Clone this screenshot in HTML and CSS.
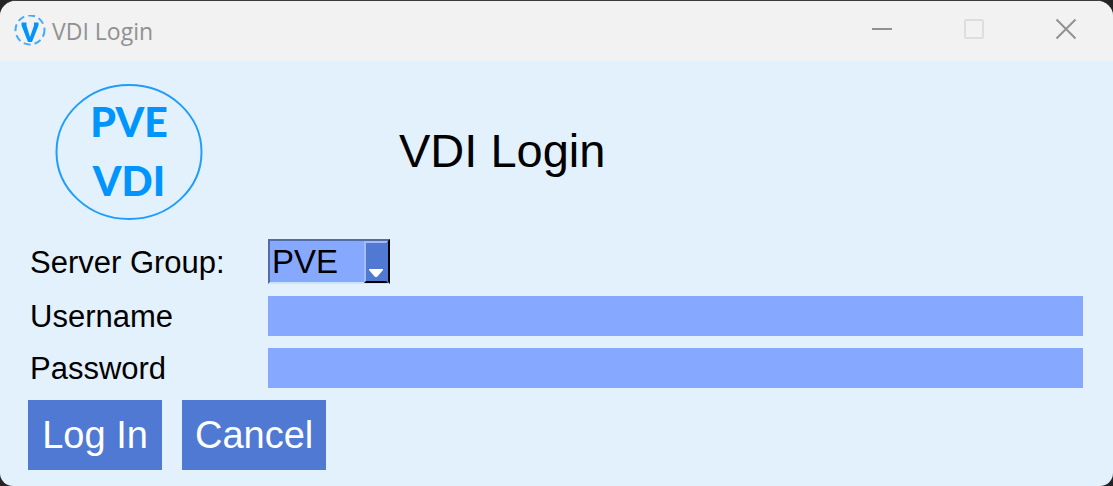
FILE: index.html
```html
<!DOCTYPE html>
<html lang="en">
<head>
<meta charset="utf-8">
<meta name="viewport" content="width=device-width, initial-scale=1">
<title>VDI Login</title>
<link rel="stylesheet" href="styles.css">
</head>
<body>
<div class="window">
  <header class="titlebar">
    <svg class="app-icon" viewBox="0 0 32 32" aria-hidden="true">
      <circle class="ring" cx="16" cy="15" r="14.500"/>
      <path class="mark" d="M7.500 7.500h5v3L16 22l4-11.500v-3h4.500v3L18 27h-4L7.500 10.500z"/>
    </svg>
    <span class="caption">VDI Login</span>
    <div class="controls">
      <button class="control" type="button" aria-label="Minimize"><svg viewBox="0 0 22 22"><path d="M1 11h20"/></svg></button>
      <button class="control" type="button" aria-label="Maximize" disabled><svg viewBox="0 0 22 22"><rect x="2" y="2" width="18" height="18" rx="1.500"/></svg></button>
      <button class="control" type="button" aria-label="Close"><svg viewBox="0 0 22 22"><path d="M1.500 1.500l19 19M20.500 1.500l-19 19"/></svg></button>
    </div>
  </header>
  <main class="content">
    <div class="banner">
      <svg class="logo" viewBox="0 0 148 138" role="img" aria-label="PVE VDI">
        <ellipse cx="74" cy="69" rx="72.500" ry="67"/>
        <text x="74" y="54">PVE</text>
        <text x="74" y="113">VDI</text>
      </svg>
      <h1 class="heading">VDI Login</h1>
    </div>
    <form class="form">
      <label class="label" for="group">Server Group:</label>
      <div class="combo">
        <select class="select" id="group"><option>PVE</option></select>
        <span class="arrow" aria-hidden="true"><svg viewBox="0 0 14 8"><path d="M0 0h14v1L8 8H6L0 1z"/></svg></span>
      </div>
      <label class="label" for="username">Username</label>
      <input class="field" id="username" type="text">
      <label class="label" for="password">Password</label>
      <input class="field" id="password" type="password">
      <div class="actions">
        <button class="button" type="button">Log In</button>
        <button class="button" type="button">Cancel</button>
      </div>
    </form>
  </main>
</div>
</body>
</html>
```

FILE: styles.css
```css
* {
  box-sizing: border-box;
}

body {
  margin: 0;
  background: #242424;
  font-family: "Liberation Sans", Arial, sans-serif;
  color: #000;
}

.window {
  display: flex;
  flex-direction: column;
  min-height: 100vh;
  border-top: 1px solid #3b3b3b;
  border-radius: 16px 16px 13px 13px;
  background: #e3f1fd;
  overflow: hidden;
}

.titlebar {
  display: flex;
  align-items: center;
  height: 60px;
  padding: 0 1px 0 14px;
  background: #f2f2f2;
}

.app-icon {
  width: 32px;
  height: 32px;
  margin-right: 6px;
}

.ring {
  fill: none;
  stroke: #3fadff;
  stroke-width: 2;
  stroke-dasharray: 7 4;
}

.mark {
  fill: #0094ff;
}

.caption {
  font: 23px "Open Sans", sans-serif;
  color: #919191;
}

.controls {
  display: flex;
  margin-left: auto;
}

.control {
  display: flex;
  align-items: center;
  justify-content: center;
  width: 92px;
  height: 60px;
  padding: 0 0 4px;
  border: 0;
  background: none;
}

.control svg {
  width: 22px;
  height: 22px;
  fill: none;
  stroke: #929292;
  stroke-width: 2;
}

.control:disabled svg {
  stroke: #dedede;
}

.content {
  padding: 22px 30px 16px 28px;
}

.banner {
  display: flex;
  align-items: center;
  padding-left: 27px;
  margin-bottom: 18px;
}

.logo {
  width: 148px;
  height: 138px;
}

.logo ellipse {
  fill: none;
  stroke: #1f9dff;
  stroke-width: 2;
}

.logo text {
  fill: #0094ff;
  font: 900 41px Lato, sans-serif;
  text-anchor: middle;
}

.heading {
  margin: 0 0 0 196px;
  padding-bottom: 4px;
  font-size: 47px;
  font-weight: 400;
}

.form {
  display: grid;
  grid-template-columns: 240px 1fr;
  row-gap: 12px;
  align-items: center;
}

.label {
  padding: 2px 0 0 2px;
  font-size: 31px;
  line-height: 38px;
}

.combo {
  position: relative;
  width: 122px;
  height: 45px;
  border: 2px solid;
  border-color: #536ba6 #000 #c5e6ff #536ba6;
}

.select {
  appearance: none;
  display: block;
  width: 100%;
  height: 100%;
  padding: 0 0 0 2px;
  border: 0;
  border-radius: 0;
  background: #86a8ff;
  color: #000;
  font: 33px "Liberation Sans", Arial, sans-serif;
}

.arrow {
  position: absolute;
  top: 0;
  right: 0;
  bottom: -1px;
  display: flex;
  align-items: flex-end;
  justify-content: center;
  width: 24px;
  padding-bottom: 4px;
  border: 2px solid;
  border-color: #a5bdf5 #5079d3 #000 #a5bdf5;
  background: #5079d3;
  pointer-events: none;
}

.arrow svg {
  width: 14px;
  height: 8px;
  fill: #fff;
}

.field {
  width: 100%;
  height: 40px;
  padding: 0 4px;
  border: 0;
  border-radius: 0;
  background: #86a8ff;
  font: 31px "Liberation Sans", Arial, sans-serif;
}

.actions {
  grid-column: 1 / -1;
  display: flex;
  gap: 20px;
}

.button {
  min-width: 134px;
  height: 70px;
  padding: 0 13px;
  border: 0;
  background: #5079d3;
  color: #fff;
  font: 38px "Liberation Sans", Arial, sans-serif;
}
```
